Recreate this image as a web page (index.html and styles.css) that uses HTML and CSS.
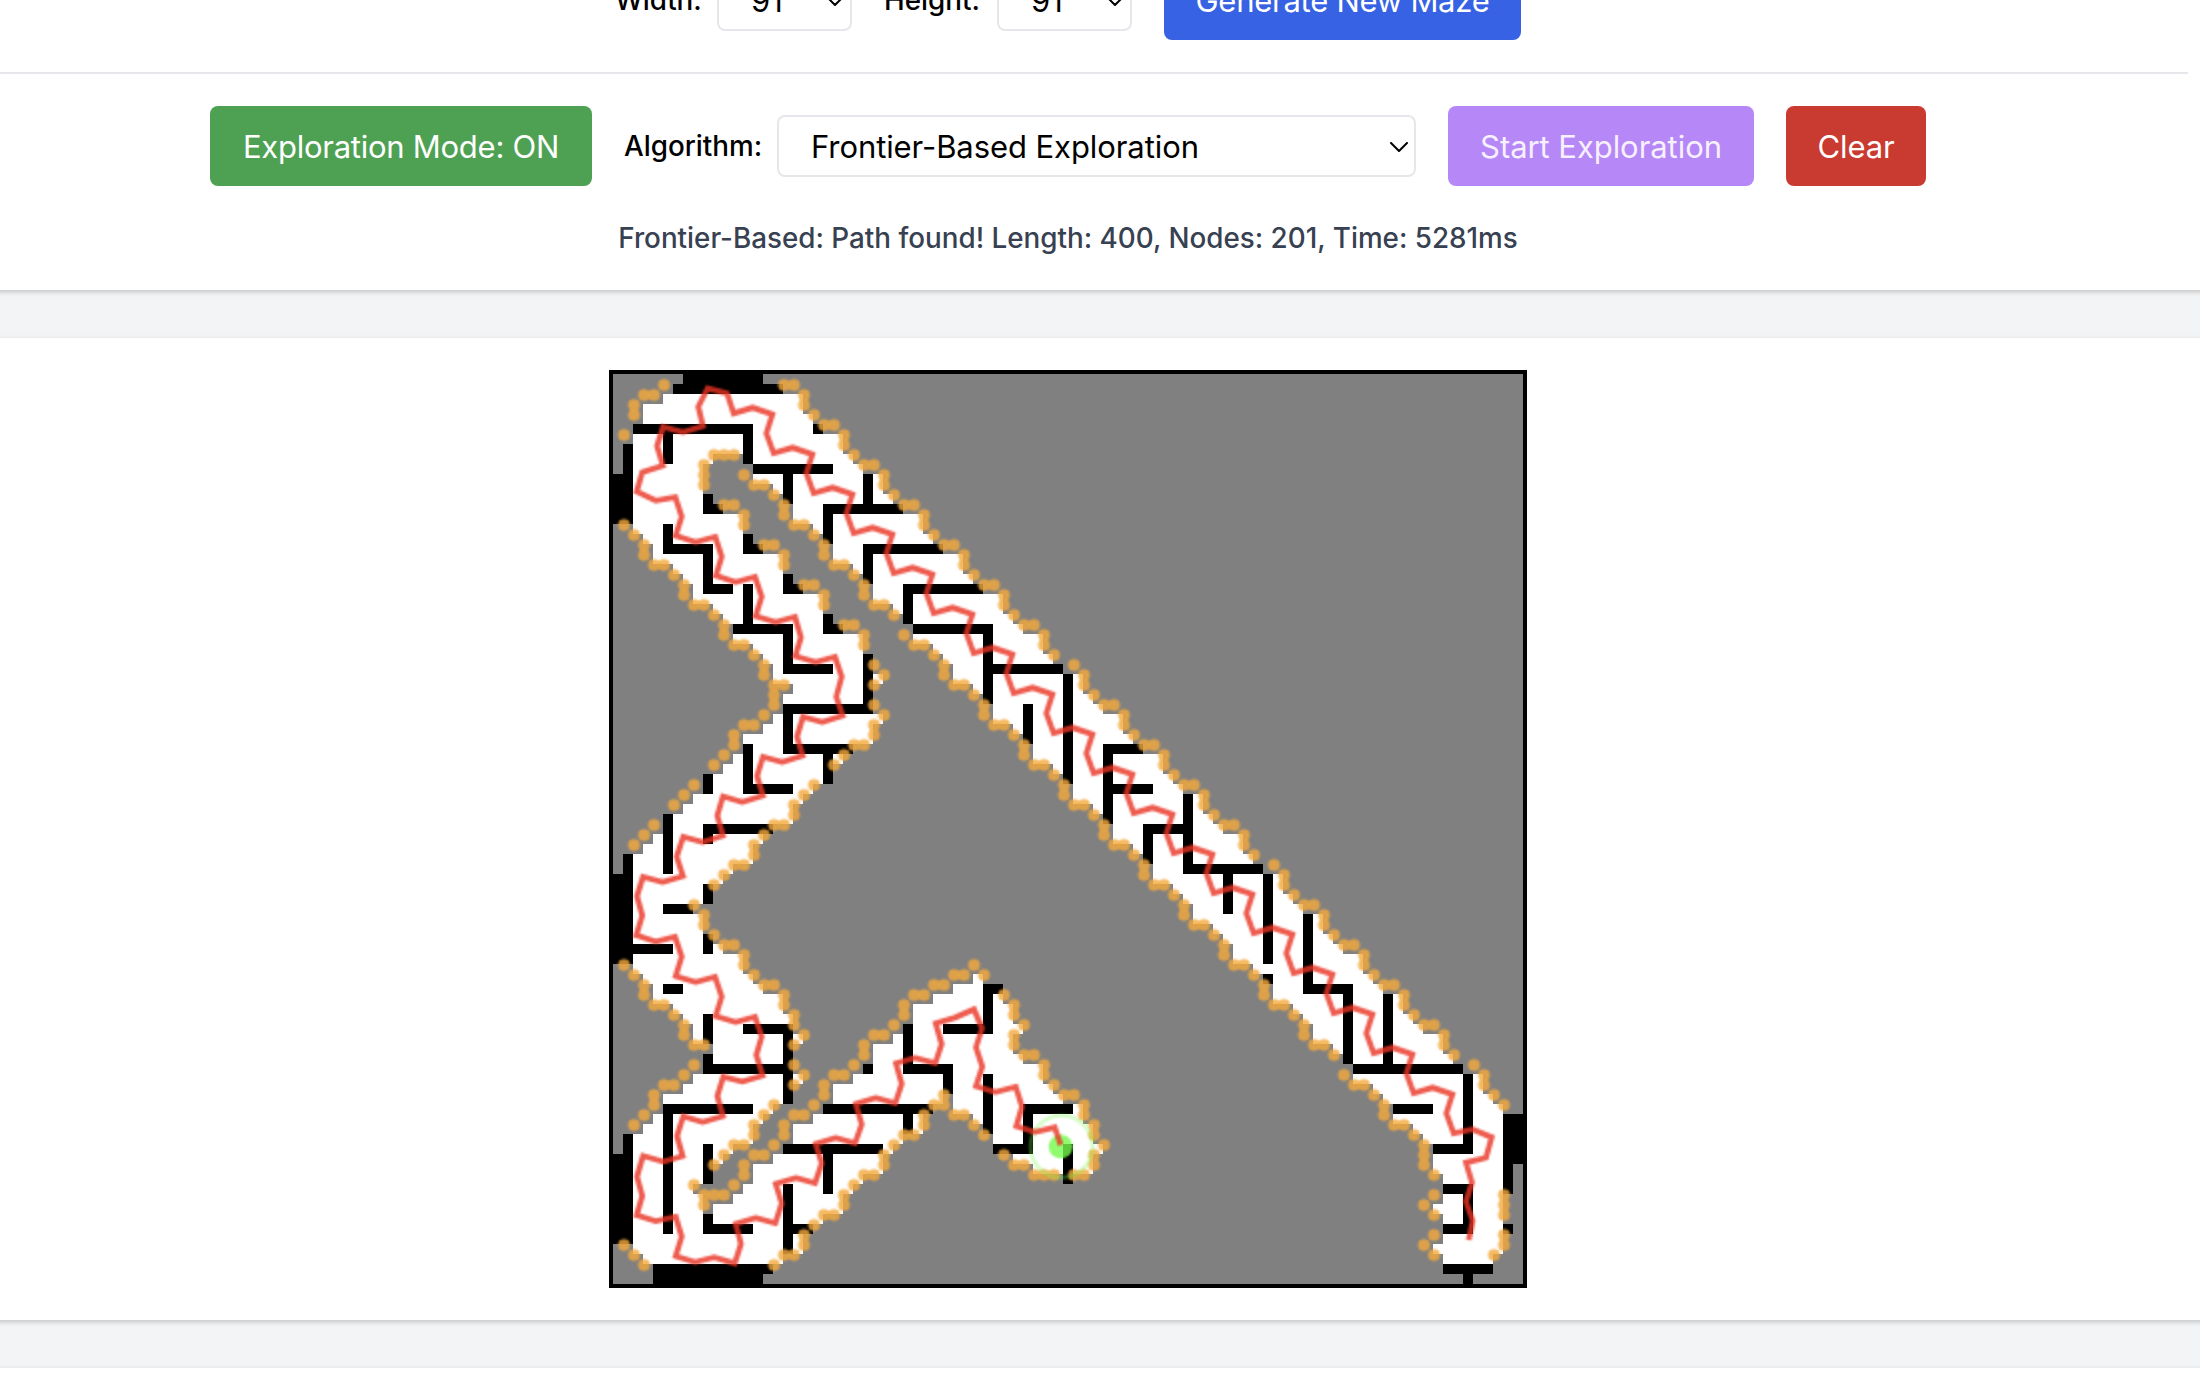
FILE: index.html
```html
<!DOCTYPE html>
<html lang="en">
<head>
<meta charset="utf-8">
<title>Maze Explorer</title>
<link rel="stylesheet" href="styles.css">
</head>
<body>
<main class="page">
  <section class="card controls">
    <div class="row row-size">
      <div class="field">
        <span class="label label-width">Width:</span>
        <div class="select select-size"><span>91</span><svg class="chevron" viewBox="0 0 18 10"><path d="M1 1l8 8 8-8"/></svg></div>
      </div>
      <div class="field">
        <span class="label label-height">Height:</span>
        <div class="select select-size"><span>91</span><svg class="chevron" viewBox="0 0 18 10"><path d="M1 1l8 8 8-8"/></svg></div>
      </div>
      <button class="btn btn-generate">Generate New Maze</button>
    </div>
    <div class="row row-explore">
      <button class="btn btn-mode">Exploration Mode: ON</button>
      <div class="field">
        <span class="label label-algo">Algorithm:</span>
        <div class="select select-algo"><span>Frontier-Based Exploration</span><svg class="chevron" viewBox="0 0 18 10"><path d="M1 1l8 8 8-8"/></svg></div>
      </div>
      <button class="btn btn-start">Start Exploration</button>
      <button class="btn btn-clear">Clear</button>
    </div>
    <p class="status">Frontier-Based: Path found! Length: 400, Nodes: 201, Time: 5281ms</p>
  </section>
  <section class="card board">
    <canvas class="maze" id="maze" width="910" height="910"></canvas>
  </section>
  <section class="card next"></section>
</main>
<script src="maze.js"></script>
</body>
</html>
```
FILE: styles.css
```css
* { box-sizing: border-box; }
html { height: 100%; overflow: hidden; }
body {
  margin: 0;
  height: 1380px;
  overflow: hidden;
  background: #f3f4f6;
  color: #000;
  font-family: Inter, "Liberation Sans", sans-serif;
}
.page {
  display: flex;
  flex-direction: column;
  gap: 48px;
  width: 2304px;
  margin: -72px 0 0 -84px;
}
.card {
  flex: none;
  padding: 32px;
  background: #fff;
  box-shadow: 0 2px 6px rgba(0, 0, 0, .1), 0 2px 4px rgba(0, 0, 0, .1);
}
.controls { height: 362px; }
.row {
  display: flex;
  align-items: center;
  justify-content: center;
  gap: 32px;
}
.row-size {
  padding-bottom: 32px;
  border-bottom: 2px solid #e5e7eb;
}
.row-explore { padding-top: 32px; }
.field {
  display: flex;
  align-items: center;
  gap: 16px;
}
.label {
  font-size: 27.8px;
  font-weight: 500;
  line-height: 40px;
  white-space: nowrap;
}
.label-width { width: 86px; letter-spacing: -.1px; }
.label-height { width: 97px; }
.label-algo { width: 137px; }
.select {
  display: flex;
  align-items: center;
  justify-content: space-between;
  height: 62px;
  padding: 1px 6px 0 32px;
  border: 2px solid #e5e7eb;
  border-radius: 8px;
  background: #fff;
  font-size: 31px;
  line-height: 48px;
  white-space: nowrap;
}
.select-size { width: 135px; }
.select-algo { width: 639px; letter-spacing: -.08px; }
.chevron {
  width: 18px;
  height: 10px;
  fill: none;
  stroke: #000;
  stroke-width: 2;
  stroke-linecap: round;
  stroke-linejoin: round;
}
.btn {
  height: 80px;
  padding: 2px 0 0;
  border: 0;
  border-radius: 8px;
  color: #fff;
  font: 400 31px/48px Inter, "Liberation Sans", sans-serif;
  white-space: nowrap;
}
.btn-generate { width: 357px; background: #3762e3; letter-spacing: -.26px; }
.btn-mode { width: 382px; background: #4ea153; letter-spacing: -.26px; }
.btn-start { width: 306px; background: #b687f6; color: #f7f0fe; letter-spacing: -.06px; }
.btn-clear { width: 140px; background: #c93a31; letter-spacing: -.1px; }
.status {
  margin: 32px 0 0;
  color: #374151;
  font-size: 27.8px;
  font-weight: 500;
  line-height: 40px;
  text-align: center;
}
.board {
  display: flex;
  justify-content: center;
  height: 982px;
}
.maze {
  box-sizing: content-box;
  width: 910px;
  height: 910px;
  border: 4px solid #000;
}
.next { height: 12px; padding: 0; }
```
FILE: maze.js
```js
const SIZE = 91;
const CELL = 10;

// Explored column ranges per row: [start, end) pairs.
const explored = [
  [7,15],[6,17],[5,19],[3,19],[3,20],[2,21],[2,23],[1,23],[1,10,13,24],[1,9,14,25],
  [0,9,14,27],[0,9,16,27],[0,10,17,28],[0,11,18,29],[0,13,18,31],[2,13,20,31],[3,14,21,32],[4,15,22,33],[4,17,22,35],[6,17,24,35],
  [7,18,25,36],[8,19,26,37],[8,21,26,39],[10,21,28,39],[11,22,29,40],[12,23,30,41],[12,25,30,43],[14,25,32,43],[15,26,33,44],[16,26,34,45],
  [16,27,34,47],[18,26,36,47],[17,26,37,48],[17,26,38,49],[16,27,38,51],[15,26,40,51],[13,26,41,52],[13,24,42,53],[12,23,42,55],[11,22,44,55],
  [9,22,45,56],[9,20,46,57],[8,19,46,59],[7,18,48,59],[5,18,49,60],[5,16,50,61],[4,15,50,63],[3,14,52,63],[1,14,53,64],[1,12,54,65],
  [0,11,54,67],[0,10,56,67],[0,10,57,68],[0,8,58,69],[0,9,58,71],[0,9,60,71],[0,10,61,72],[0,11,62,73],[0,13,62,75],[2,13,64,75],
  [3,14,36,37,65,76],[4,15,34,39,66,77],[4,17,32,39,66,79],[6,17,30,40,68,79],[7,18,30,40,69,80],[8,18,29,41,70,81],[8,19,28,40,70,83],[10,18,26,40,72,83],[9,18,26,41,73,84],[9,18,25,43,74,85],
  [8,19,24,43,74,87],[7,18,22,44,76,87],[5,18,22,33,34,45,77,88],[5,16,21,32,34,47,78,89],[4,15,20,31,36,47,78,91],[3,14,18,31,37,48,80,91],[1,14,18,29,38,48,81,91],[1,12,17,28,38,49,82,91],[0,11,16,27,40,48,82,91],[0,10,14,27,42,48,82,90],
  [0,10,14,25,45,46,83,90],[0,8,13,24,83,90],[0,9,12,23,83,89],[0,9,10,23,82,89],[0,21,83,89],[0,20,83,90],[0,19,83,89],[2,19,82,89],[3,17,83,88],[4,16,83,88],
  [4,15,85,86]
];

// Discovered walls: column, row, width, height.
const walls = [
  [7,0,8,1],[6,1,11,1],[2,5,12,1],[13,6,1,3],[5,6,1,3],[20,5,1,1],[1,7,1,3],[0,10,2,5],
  [14,9,8,1],[17,10,1,3],[25,10,1,3],[21,13,8,1],[21,14,1,3],[25,17,8,1],[25,18,1,3],[29,21,8,1],[29,22,1,3],
  [30,25,8,1],[37,26,1,7],[38,29,7,1],[41,33,1,4],[45,30,1,11],[49,37,4,1],[49,37,1,8],[50,41,4,1],
  [57,42,1,7],[53,45,4,1],[53,46,1,3],[57,49,8,1],[61,50,1,4],[65,50,1,9],[65,60,1,1],[69,54,1,7],[69,61,5,1],
  [73,62,1,7],[77,62,1,7],[74,69,11,1],[85,70,1,8],[82,77,4,1],[78,73,4,1],[83,81,3,1],[85,82,1,3],[83,85,3,1],
  [83,89,5,1],[85,90,1,1],[89,74,2,5],[89,79,1,3],[89,85,1,1],
  [9,12,1,1],[9,13,2,1],[13,16,1,1],[13,17,2,1],[17,20,1,1],[17,21,2,1],[21,24,1,1],[21,25,2,1],
  [5,15,1,2],[5,17,5,1],[9,18,1,3],[9,21,3,1],[13,21,1,4],[12,25,6,1],[17,26,1,3],[17,29,5,1],[25,28,1,5],
  [17,33,9,1],[17,34,1,3],[17,37,7,1],[21,38,1,3],[13,37,1,4],[13,41,5,1],[9,40,1,2],[9,45,7,1],[9,46,1,1],[5,44,1,6],
  [1,48,1,2],[0,50,2,9],[9,51,1,2],[5,53,3,1],[9,56,1,2],[2,57,4,1],[5,61,2,1],[9,64,1,3],[13,65,5,1],[17,66,1,3],
  [9,68,1,1],[9,69,9,1],[17,70,1,3],[5,73,9,1],[5,74,1,12],[9,77,1,4],[1,76,1,2],[0,78,2,9],[9,84,1,1],[9,85,5,1],
  [4,89,12,1],[4,90,11,1],[17,81,1,7],[18,85,2,1],[17,77,10,1],[21,78,1,4],[21,73,11,1],[29,74,1,2],[25,69,1,1],
  [29,65,1,4],[29,69,5,1],[33,70,1,2],[33,65,5,1],[37,61,1,5],[37,61,2,1],[37,70,1,6],[41,73,5,1],[41,74,1,3],
  [38,77,4,1],[45,77,1,4]
];

// Robot trail in pixels, from the current position back to the long corridor.
const trail = [
  447.7,771, 441.7,753.3, 422,758.3, 403.3,752, 409,732.7, 402.7,712.7, 382.3,718, 363,712, 369.3,692.7, 363,673.3,
  369,654.3, 361,635.3, 341.7,643.7, 322.7,649.3, 328.7,670, 322.3,689.3, 302,683.7, 283,689.3, 288.7,710, 282.3,729.3,
  262.7,723.7, 242.8,729.7, 248.7,750.3, 242,769.3, 222.7,763.7, 202.7,770, 208.7,789.3, 202,809.3, 183,804, 162.7,810,
  168.7,829.3, 162.3,849.3, 142.7,844, 122.7,850, 128,870, 121.7,889.3, 101.3,883.3, 82,888, 62.7,882, 68.7,862.7,
  62.7,842.7, 42.7,847.3, 23.7,841, 29.3,822, 24,802.7, 30,782, 50.3,787.7, 69.7,782, 64,762, 70.3,742.3,
  89.7,748, 110,742.3, 104.3,722, 110.3,702.7, 129.3,707.7, 149.7,701.7, 143.3,681, 148.7,662.7, 142,642.7, 122.7,648,
  102.7,642, 108.7,622.7, 102,602.7, 82.7,608, 62.7,602, 68.7,582.7, 62,562.7, 42.7,567.7, 23.3,561.3, 29.3,541.7,
  24,522, 30,503, 49.7,508.3, 70,502, 63.7,482.7, 70.3,462.7, 89.7,468, 110,461.7, 104.3,441.7, 110,422.3,
  129.3,428, 150,421.7, 144,402, 150,382.7, 169.3,388, 189.7,381.7, 184,362.7, 190,343, 209.3,348.3, 229.7,341.7,
  223.3,322.7, 228.7,302.7, 222,283, 202.7,288, 182.3,282.3, 188,263.3, 182,243, 162.7,248, 142.7,242, 148.7,222.7,
  142,202.7, 122.7,208, 103,201.7, 108.7,182.7, 102.3,162.7, 82.7,168, 62.7,161.7, 68.7,142.7, 62.3,123, 42.7,126.7,
  23.7,117.7, 29.3,98.3, 50,91.7, 44,72, 50,53, 70,58.3, 90,52.3, 85.3,32.7, 94.7,14.3, 114,19.3
];
for (let k = 0; k < 18; k++) {
  const x = 120.7 + 40 * k, y = 39.3 + 40 * k;
  trail.push(x, y, x + 19, y - 5.7, x + 38.7, y + 1, x + 32.7, y + 20);
}
trail.push(840.7,759.3, 859.7,755.3, 878.7,763.3, 873,783.7, 853,788.7, 859,808.7, 853,827.7, 859.7,846.7, 855.7,866);

const UNKNOWN = 0, FREE = 1, WALL = 2;
const grid = explored.map(spans => {
  const row = new Array(SIZE).fill(UNKNOWN);
  for (let i = 0; i < spans.length; i += 2) row.fill(FREE, spans[i], spans[i + 1]);
  return row;
});
for (const [c, r, w, h] of walls)
  for (let y = r; y < r + h; y++) grid[y].fill(WALL, c, c + w);

const screen = document.getElementById('maze').getContext('2d');
const colors = ['#808080', '#ffffff', '#000000'];
grid.forEach((row, y) => row.forEach((v, x) => {
  screen.fillStyle = colors[v];
  screen.fillRect(x * CELL, y * CELL, CELL, CELL);
}));

// Markers and trail live on a half-resolution layer that is scaled up.
const layer = document.createElement('canvas');
layer.width = layer.height = SIZE * CELL / 2;
const ctx = layer.getContext('2d');
ctx.scale(.5, .5);

function disc(x, y, radius) {
  ctx.beginPath();
  ctx.arc(x, y, radius, 0, Math.PI * 2);
}

// Frontier: unknown cells that touch a free cell.
const isFree = (x, y) => grid[y] !== undefined && grid[y][x] === FREE;
ctx.fillStyle = 'rgba(242, 169, 60, .8)';
for (let y = 0; y < SIZE; y++)
  for (let x = 0; x < SIZE; x++)
    if (grid[y][x] === UNKNOWN && (isFree(x - 1, y) || isFree(x + 1, y) || isFree(x, y - 1) || isFree(x, y + 1))) {
      disc(x * CELL + 1, y * CELL + 1, 6);
      ctx.fill();
    }

// Robot and its sensor ring.
ctx.fillStyle = 'rgba(118, 250, 76, .8)';
disc(447.7, 772.5, 12);
ctx.fill();
ctx.strokeStyle = 'rgba(118, 250, 76, .3)';
ctx.lineWidth = 4;
disc(448.5, 772.5, 31);
ctx.stroke();

ctx.strokeStyle = 'rgba(234, 51, 35, .8)';
ctx.lineWidth = 5.6;
ctx.beginPath();
for (let i = 0; i < trail.length; i += 2) ctx.lineTo(trail[i], trail[i + 1]);
ctx.stroke();

screen.drawImage(layer, 0, 0, SIZE * CELL, SIZE * CELL);
```
